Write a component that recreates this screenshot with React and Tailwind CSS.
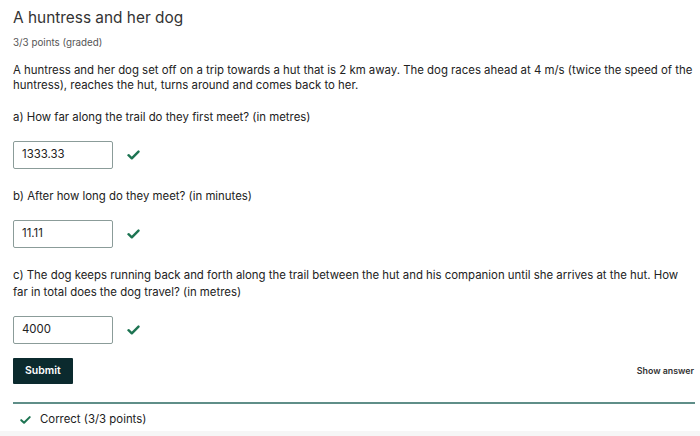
import React from "react";

function Check({ className = "", w = 13 }) {
  return (
    <svg className={className} width={w} height="10" viewBox="0 0 13 10" fill="none">
      <path d="M1.5 5.2 L4.8 8.3 L11.5 1.6" stroke="#1d7452" strokeWidth="2.4" strokeLinecap="round" strokeLinejoin="round" />
    </svg>
  );
}

function Answer({ value, className = "" }) {
  return (
    <div className={`flex items-center ${className}`}>
      <div className="w-[100px] h-[28px] border border-[#8b9c99] rounded-[2px] flex items-center pl-[8px] text-[11.4px] text-[#222]">
        {value}
      </div>
      <Check className="ml-[14px]" />
    </div>
  );
}

export default function App() {
  return (
    <div className="w-[700px] h-[436px] bg-white overflow-hidden flex flex-col" style={{ fontFamily: "Inter, 'Noto Sans', sans-serif" }}>
      <div className="pt-[8px] pl-[13px] pr-[5px] flex flex-col text-[#222]">
        <h1 className="text-[15.4px] leading-[20px] text-[#333] font-normal">A huntress and her dog</h1>
        <p className="mt-[8px] text-[9.8px] leading-[14px] text-[#555]">3/3 points (graded)</p>
        <p className="mt-[13px] text-[11.4px] leading-[15px]">
          A huntress and her dog set off on a trip towards a hut that is 2 km away. The dog races ahead at 4 m/s (twice the speed of the huntress), reaches the hut, turns around and comes back to her.
        </p>
        <p className="mt-[16px] text-[11.4px] leading-[16px]">a) How far along the trail do they first meet? (in metres)</p>
        <Answer value="1333.33" className="mt-[16px]" />
        <p className="mt-[19px] text-[11.4px] leading-[16px]">b) After how long do they meet? (in minutes)</p>
        <Answer value="11.11" className="mt-[16px]" />
        <p className="mt-[19px] text-[11.4px] leading-[17px]">
          c) The dog keeps running back and forth along the trail between the hut and his companion until she arrives at the hut. How far in total does the dog travel? (in metres)
        </p>
        <Answer value="4000" className="mt-[15px]" />
        <div className="mt-[14px] flex items-center justify-between">
          <button className="h-[26px] px-[12px] bg-[#0b2a2e] text-white text-[10.5px] font-semibold rounded-[1px]">Submit</button>
          <span className="text-[8.8px] font-semibold text-[#333] pr-[1px]">Show answer</span>
        </div>
        <div className="mt-[18px] h-[2px] bg-[#5f8e88]" />
        <div className="mt-[8px] h-[16px] flex items-center pl-[7px] text-[11.4px] text-[#222]">
          <Check w={11} />
          <span className="ml-[9px]">Correct (3/3 points)</span>
        </div>
      </div>
      <div className="mt-[3px] flex-1 bg-[#f6f6f6]" />
    </div>
  );
}
